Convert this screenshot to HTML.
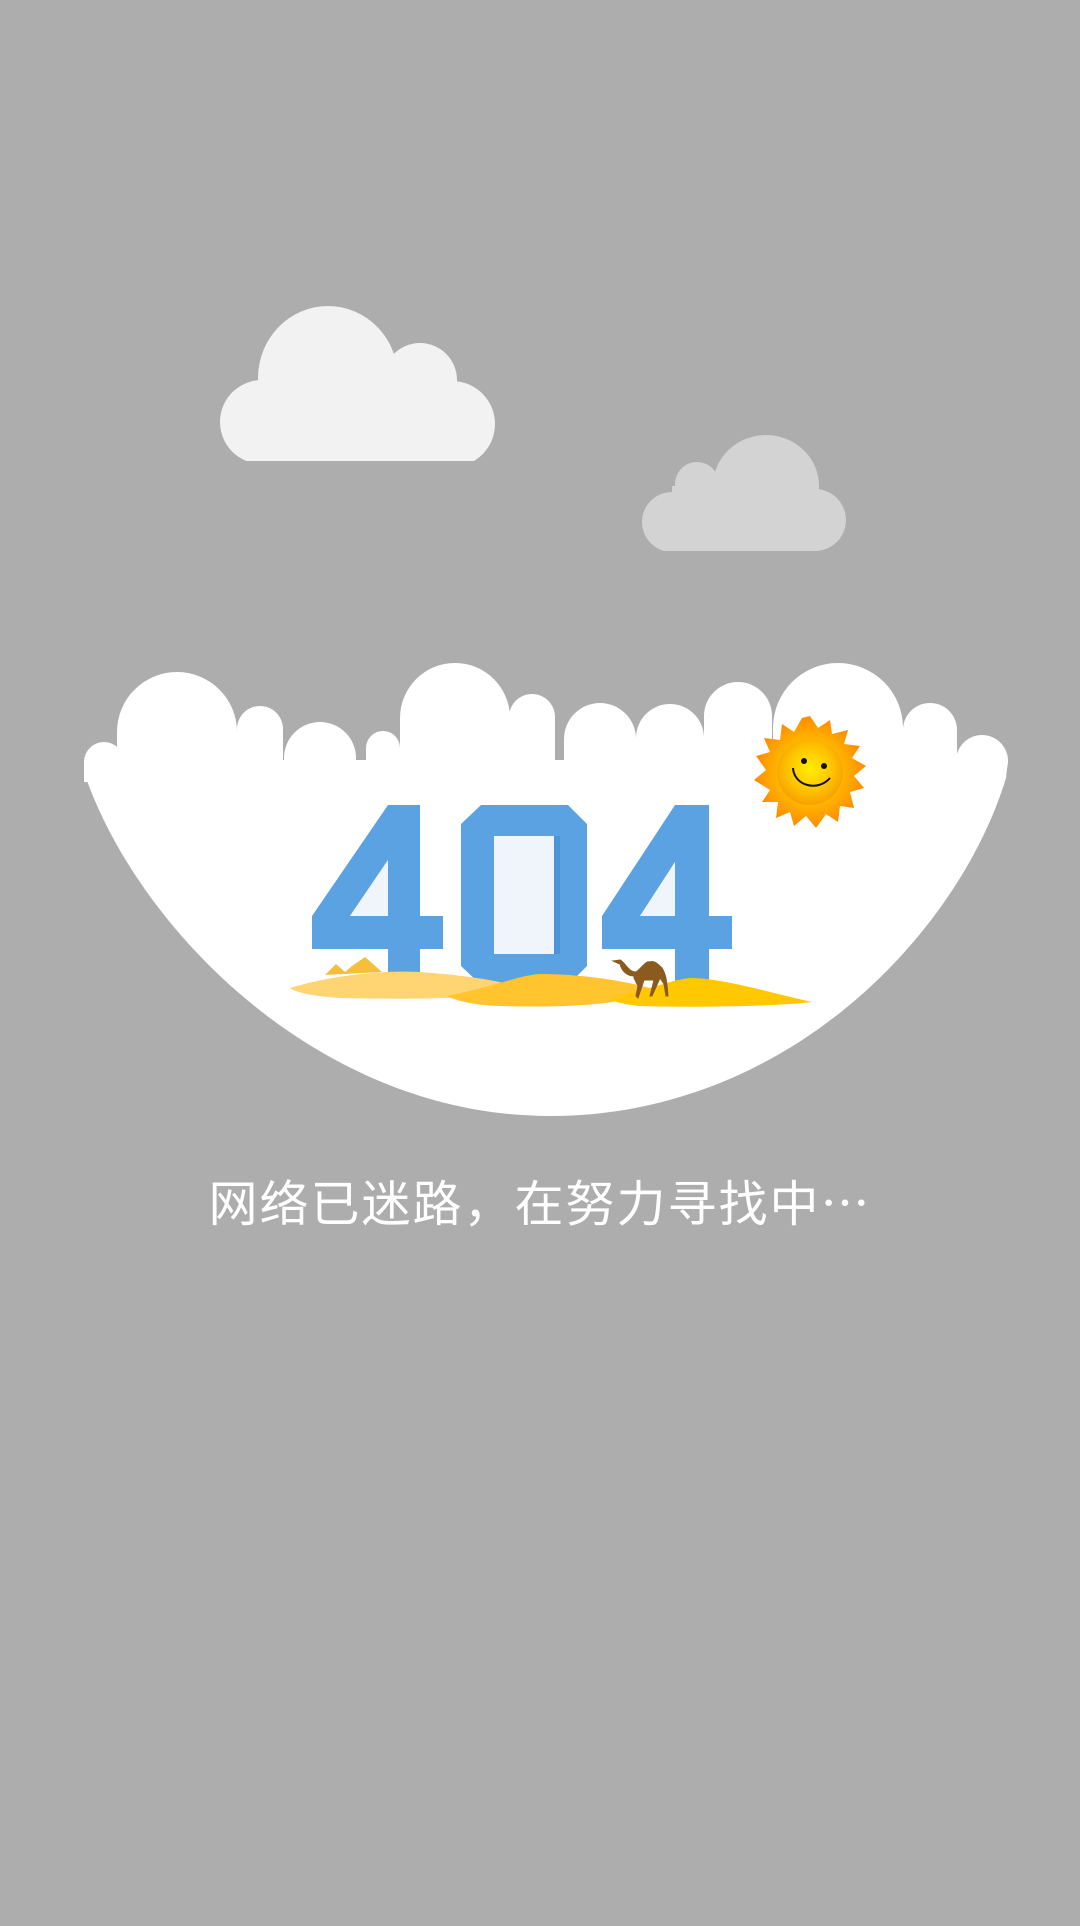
<!DOCTYPE html>
<html><head><meta charset="utf-8"><style>
html,body{margin:0;padding:0;background:#adadad;}
body{width:1080px;height:1926px;position:relative;overflow:hidden;}
svg{position:absolute;left:0;top:0;}
.t{position:absolute;left:0;width:1080px;top:1166px;text-align:center;color:#fff;font-family:"Noto Sans CJK SC",sans-serif;font-size:49px;letter-spacing:2px;line-height:70px;}
</style></head><body>
<svg width="1080" height="1926" viewBox="0 0 1080 1926">
<defs>
<radialGradient id="sg" cx="50%" cy="45%" r="55%"><stop offset="0" stop-color="#ffee00"/><stop offset="0.6" stop-color="#ffc400"/><stop offset="1" stop-color="#f7a000"/></radialGradient>
<radialGradient id="rg" cx="50%" cy="50%" r="50%"><stop offset="0.6" stop-color="#ffb400"/><stop offset="1" stop-color="#ff8a00"/></radialGradient>
<clipPath id="c1"><rect x="0" y="0" width="1080" height="461"/></clipPath>
<clipPath id="c2"><rect x="0" y="0" width="1080" height="551"/></clipPath>
</defs>
<g fill="#f2f2f2" clip-path="url(#c1)">
<ellipse cx="328" cy="378" rx="70" ry="72"/>
<circle cx="420" cy="380" r="37"/>
<circle cx="262" cy="422" r="42"/>
<circle cx="452" cy="424" r="43"/>
<rect x="262" y="380" width="190" height="81"/>
</g>
<g fill="#d3d3d3" clip-path="url(#c2)">
<ellipse cx="766" cy="486" rx="53" ry="51"/>
<circle cx="697" cy="484" r="22"/>
<circle cx="672" cy="522" r="30"/>
<circle cx="815" cy="520" r="31"/>
<rect x="672" y="486" width="143" height="65"/>
</g>
<g fill="#fff">
<path d="M86 778 C140 930 320 1116 550 1116 C790 1116 960 930 1006 778 L1008 760 L84 760 Z"/>
<circle cx="104" cy="762" r="20"/><rect x="84" y="762" width="40" height="20"/>
<circle cx="177" cy="732" r="60"/><rect x="117" y="732" width="120" height="40"/>
<circle cx="260" cy="729" r="23"/><rect x="237" y="729" width="46" height="40"/>
<circle cx="320" cy="758" r="36"/>
<circle cx="383" cy="748" r="17"/><rect x="366" y="748" width="34" height="20"/>
<circle cx="455" cy="718" r="55"/><rect x="400" y="718" width="110" height="50"/>
<circle cx="532" cy="717" r="23"/><rect x="509" y="717" width="46" height="50"/>
<circle cx="600" cy="739" r="36"/><rect x="564" y="739" width="72" height="30"/>
<circle cx="670" cy="738" r="34"/><rect x="636" y="738" width="68" height="30"/>
<circle cx="738" cy="716" r="34"/><rect x="704" y="716" width="68" height="50"/>
<circle cx="838" cy="728" r="65"/><rect x="773" y="728" width="130" height="40"/>
<circle cx="930" cy="730" r="27"/><rect x="903" y="730" width="54" height="40"/>
<circle cx="982" cy="761" r="26"/>
</g>
<g fill="#5aa2e2">
<path d="M388 805 L420 805 L420 985 L388 985 Z"/>
<rect x="312" y="916" width="131" height="33"/>
<path d="M388 805 L312 916 L350 916 L388 860 Z"/>
<path d="M481 805 L568 805 L587 824 L587 966 L568 985 L481 985 L461 966 L461 824 Z"/>
<path d="M675 805 L709 805 L709 985 L675 985 Z"/>
<rect x="602" y="916" width="130" height="33"/>
<path d="M675 805 L602 916 L640 916 L675 862 Z"/>
</g>
<path d="M388 860 L350 916 L388 916 Z" fill="#f0f5fc"/>
<rect x="494" y="836" width="60" height="118" fill="#f0f5fc"/>
<rect x="554" y="836" width="6" height="118" fill="#4d94d8"/>
<path d="M675 862 L640 916 L675 916 Z" fill="#f0f5fc"/>
<path d="M325 975 L336 964 L345 972 L352 966 L365 957 L382 972 Z" fill="#f6bf3a"/>
<path d="M290 988 C330 976 380 970 420 972 C460 975 500 980 520 988 C500 998 420 1000 340 998 C310 996 295 992 290 988 Z" fill="#ffd472"/>
<path d="M447 996 C500 985 520 975 540 974 C580 974 620 980 650 988 C640 1005 560 1008 500 1006 C470 1005 455 1000 447 996 Z" fill="#ffc42e"/>
<path d="M610 998 C650 990 670 980 690 978 C720 978 760 990 812 1002 C780 1006 700 1008 640 1006 C620 1004 612 1001 610 998 Z" fill="#ffc800"/>
<g fill="#8a5a1e" stroke="#8a5a1e">
<path d="M613 961 L620 960 C625 962 628 972 636 972 C642 968 646 960 650 962 C654 960 658 964 662 968 C666 974 667 982 668 996 L666 996 L664 984 L660 978 L652 996 L650 996 L654 980 L644 980 L640 992 L638 998 L636 996 L638 986 L634 978 L634 976 C628 976 622 972 620 964 Z" stroke-width="1"/>
</g>
<g transform="translate(810 772)">
<polygon fill="url(#rg)" points="0,-56 8,-44 20,-52 22,-38 38,-42 34,-28 50,-26 42,-14 56,-6 44,4 54,16 40,20 44,36 30,34 28,50 16,42 6,56 -4,44 -16,54 -20,40 -34,46 -32,30 -48,30 -40,18 -56,8 -44,-2 -54,-16 -40,-20 -46,-34 -30,-32 -28,-48 -16,-40 -8,-54"/>
<circle r="33" fill="url(#sg)"/>
<circle cx="-6" cy="-11" r="3" fill="#111"/>
<circle cx="14" cy="-6" r="3" fill="#111"/>
<path d="M-17 -4 C-16 14 8 20 20 6" fill="none" stroke="#111" stroke-width="2"/>
</g>
</svg>
<div class="t">网络已迷路，在努力寻找中…</div>
</body></html>
